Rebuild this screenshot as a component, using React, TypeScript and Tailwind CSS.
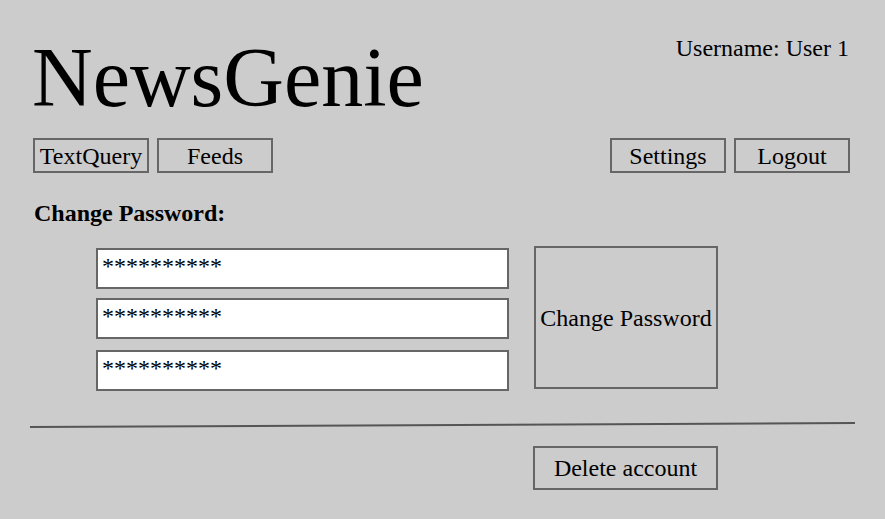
import React from "react";

const serif = "font-['Liberation_Serif','Times_New_Roman',serif]";

function NavButton({ label }: { label: string }) {
  return (
    <button className="w-[116px] h-[35px] border-2 border-[#666] bg-transparent text-[24px] leading-none text-black">
      {label}
    </button>
  );
}

function PasswordField({ className = "" }: { className?: string }) {
  return (
    <div className={`w-[413px] h-[41px] border-2 border-[#666] bg-white pl-[4px] pt-[4px] text-[24px] leading-none text-black ${className}`}>
      **********
    </div>
  );
}

export default function App() {
  return (
    <div className={`${serif} w-[885px] h-[519px] bg-[#cccccc] text-black overflow-hidden`}>
      {/* Header */}
      <div className="flex items-start justify-between pl-[32px] pr-[36px] pt-[36px]">
        <h1 className="text-[84px] leading-none font-normal">NewsGenie</h1>
        <div className="text-[24px] leading-none">Username: User 1</div>
      </div>

      {/* Nav */}
      <div className="flex justify-between pl-[33px] pr-[35px] mt-[18px]">
        <div className="flex gap-2">
          <NavButton label="TextQuery" />
          <NavButton label="Feeds" />
        </div>
        <div className="flex gap-2">
          <NavButton label="Settings" />
          <NavButton label="Logout" />
        </div>
      </div>

      {/* Change password */}
      <h2 className="pl-[34px] mt-[28px] text-[24px] leading-none font-bold">Change Password:</h2>

      <div className="flex items-start pl-[96px] mt-[21px]">
        <div className="flex flex-col pt-[2px]">
          <PasswordField />
          <PasswordField className="mt-[9px]" />
          <PasswordField className="mt-[11px]" />
        </div>
        <button className="ml-[25px] w-[184px] h-[143px] border-2 border-[#666] bg-transparent text-[24px] leading-none">
          Change Password
        </button>
      </div>

      {/* Divider */}
      <div className="ml-[30px] w-[825px] mt-[33px] border-t-2 border-[#555] -rotate-[0.28deg]" />

      <div className="flex pl-[533px] mt-[20px]">
        <button className="w-[185px] h-[44px] border-2 border-[#666] bg-transparent text-[24px] leading-none">
          Delete account
        </button>
      </div>
    </div>
  );
}
